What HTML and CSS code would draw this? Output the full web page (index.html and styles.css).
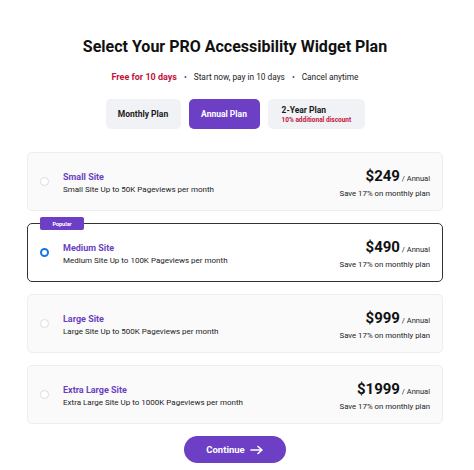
FILE: index.html
```html
<!DOCTYPE html>
<html>
<head>
<meta charset="utf-8">
<link rel="stylesheet" href="styles.css">
</head>
<body>
<div class="page">
  <h1 class="title">Select Your PRO Accessibility Widget Plan</h1>
  <div class="sub">
    <span class="free">Free for 10 days</span>
    <span class="dot">•</span>
    <span>Start now, pay in 10 days</span>
    <span class="dot">•</span>
    <span>Cancel anytime</span>
  </div>
  <div class="tabs">
    <div class="tab monthly">Monthly Plan</div>
    <div class="tab annual">Annual Plan</div>
    <div class="tab year2"><div>2-Year Plan</div><div class="disc">10% additional discount</div></div>
  </div>
  <div class="cards">
    <div class="card">
      <div class="radio"></div>
      <div class="info"><div class="name">Small Site</div><div class="desc">Small Site Up to 50K Pageviews per month</div></div>
      <div class="price"><div><span class="amt">$249</span><span class="per"> / Annual</span></div><div class="save">Save 17% on monthly plan</div></div>
    </div>
    <div class="card selected">
      <div class="badge">Popular</div>
      <div class="radio on"></div>
      <div class="info"><div class="name">Medium Site</div><div class="desc">Medium Site Up to 100K Pageviews per month</div></div>
      <div class="price"><div><span class="amt">$490</span><span class="per"> / Annual</span></div><div class="save">Save 17% on monthly plan</div></div>
    </div>
    <div class="card">
      <div class="radio"></div>
      <div class="info"><div class="name">Large Site</div><div class="desc">Large Site Up to 500K Pageviews per month</div></div>
      <div class="price"><div><span class="amt">$999</span><span class="per"> / Annual</span></div><div class="save">Save 17% on monthly plan</div></div>
    </div>
    <div class="card">
      <div class="radio"></div>
      <div class="info"><div class="name">Extra Large Site</div><div class="desc">Extra Large Site Up to 1000K Pageviews per month</div></div>
      <div class="price"><div><span class="amt">$1999</span><span class="per"> / Annual</span></div><div class="save">Save 17% on monthly plan</div></div>
    </div>
  </div>
  <div class="actions">
    <div class="continue">Continue <svg width="14" height="10" viewBox="0 0 14 10"><path d="M1 5H12M8 1.5L12 5L8 8.5" fill="none" stroke="#fff" stroke-width="1.6" stroke-linecap="round" stroke-linejoin="round"/></svg></div>
  </div>
</div>
</body>
</html>
```
FILE: styles.css
```css
html, body { margin: 0; padding: 0; background: #fff; }
body { font-family: Roboto, "Liberation Sans", sans-serif; color: #1a1a1a; }
.page { width: 416px; margin: 0 0 0 27px; padding-top: 36px; }
.title { margin: 0; text-align: center; font-size: 16px; font-weight: 700; line-height: 22px; color: #111; }
.sub { margin-top: 13px; display: flex; justify-content: center; gap: 7px; font-size: 8.3px; line-height: 12px; color: #222; }
.sub .free { color: #c0143c; font-weight: 700; font-size: 9px; }
.sub .dot { color: #4b3b8a; }
.tabs { margin-top: 16px; display: flex; justify-content: center; gap: 8px; }
.tab { height: 30px; box-sizing: border-box; border-radius: 5px; background: #f1f2f6; display: flex; flex-direction: column; justify-content: center; font-size: 8.5px; font-weight: 700; color: #1a1a1a; }
.monthly { width: 75px; align-items: center; }
.annual { width: 71px; align-items: center; background: #6c3fc5; color: #fff; }
.year2 { width: 97px; padding-left: 14px; align-items: flex-start; }
.year2 .disc { color: #c0143c; font-size: 6.5px; margin-top: 1px; }
.cards { margin-top: 23px; display: flex; flex-direction: column; gap: 12px; }
.card { position: relative; height: 59px; box-sizing: border-box; border: 1px solid #eeeef2; border-radius: 5px; background: #fafafb; display: flex; align-items: center; padding: 0 12px 0 12px; }
.card.selected { border: 1.5px solid #333; background: #fff; }
.badge { position: absolute; left: 12px; top: -7px; width: 44px; height: 13px; border-radius: 2px; background: #6c3fc5; color: #fff; font-size: 5.5px; font-weight: 700; display: flex; align-items: center; justify-content: center; }
.radio { width: 9px; height: 9px; box-sizing: border-box; border-radius: 50%; border: 1px solid #ddd; background: #fff; flex: none; margin-left: 0; }
.radio.on { border: 2.5px solid #1a73e8; }
.info { margin-left: 14px; flex: 1; padding-top: 4px; }
.name { font-size: 9px; font-weight: 700; color: #6b3fc0; line-height: 12px; }
.desc { font-size: 8px; color: #222; line-height: 12px; margin-top: 1px; }
.price { text-align: right; }
.amt { font-size: 15px; font-weight: 700; color: #111; }
.per { font-size: 7.5px; color: #222; }
.save { font-size: 7.8px; color: #222; margin-top: 4px; }
.actions { margin-top: 12px; display: flex; justify-content: center; }
.continue { width: 102px; height: 27px; border-radius: 14px; background: #6c3fc5; color: #fff; font-size: 9.5px; font-weight: 700; display: flex; align-items: center; justify-content: center; gap: 5px; }
```
